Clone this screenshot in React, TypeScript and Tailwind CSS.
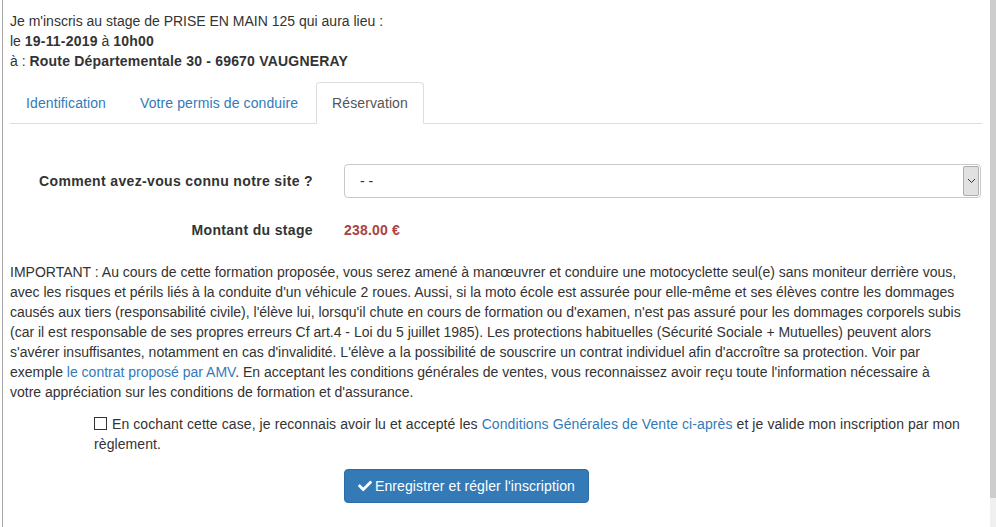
import { FaCheck } from "react-icons/fa";

export default function App() {
  return (
    <div className="flex w-[996px] h-[527px] overflow-hidden bg-white text-[14px] leading-5 text-[#333] font-['Liberation_Sans',Arial,sans-serif]">
      {/* left edge of the page behind */}
      <div className="w-[3px] shrink-0 border-r border-[#a8a8a8] bg-white" />

      {/* main panel */}
      <div className="flex-1 pl-[7px] pr-[8px] pt-[11px]">
        {/* stage summary */}
        <div>
          <p>Je m'inscris au stage de PRISE EN MAIN 125 qui aura lieu :</p>
          <p>
            le <b className="tracking-[0.2px]">19-11-2019</b> à <b className="tracking-[0.2px]">10h00</b>
          </p>
          <p>
            à : <b className="tracking-[0.2px]">Route Départementale 30 - 69670 VAUGNERAY</b>
          </p>
        </div>

        {/* tabs */}
        <ul className="mt-[11px] flex border-b border-[#ddd] tracking-[0.1px]">
          <li className="-mb-px mr-[2px]">
            <a className="block rounded-t border border-transparent px-[15px] py-[10px] text-[#337ab7]">Identification</a>
          </li>
          <li className="-mb-px mr-[2px]">
            <a className="block rounded-t border border-transparent px-[15px] py-[10px] text-[#337ab7]">Votre permis de conduire</a>
          </li>
          <li className="-mb-px mr-[2px]">
            <a className="block rounded-t border border-[#ddd] border-b-transparent bg-white px-[15px] py-[10px] text-[#555]">Réservation</a>
          </li>
        </ul>

        {/* form */}
        <div className="mt-[40px]">
          <div className="flex items-start">
            <label className="w-[303px] shrink-0 pt-[7px] text-right font-bold tracking-[0.35px]">Comment avez-vous connu notre site ?</label>
            <div className="ml-[31px] flex h-[34px] w-[637px] items-stretch rounded border border-[#c8c8c8] bg-white">
              <span className="flex-1 px-[15px] py-[6px]">- -</span>
              <span className="my-[1px] mr-[1px] flex w-[16px] items-center justify-center rounded-[2px] border border-[#adadad] bg-[#e1e1e1]">
                <svg width="9" height="6" viewBox="0 0 9 6" fill="none">
                  <path d="M1 1l3.5 3.5L8 1" stroke="#333" strokeWidth="1" />
                </svg>
              </span>
            </div>
          </div>

          <div className="mt-[15px] flex items-start">
            <span className="w-[303px] shrink-0 pt-[7px] text-right font-bold tracking-[0.35px]">Montant du stage</span>
            <span className="ml-[31px] pt-[7px] font-bold tracking-[0.2px] text-[#a94442]">238.00 €</span>
          </div>
        </div>

        <p className="mt-[22px] pr-[18px]">
          IMPORTANT : Au cours de cette formation proposée, vous serez amené à manœuvrer et conduire une motocyclette seul(e) sans moniteur derrière vous, avec les risques et périls liés à la conduite d'un véhicule 2 roues. Aussi, si la moto école est assurée pour elle-même et ses élèves contre les dommages causés aux tiers (responsabilité civile), l'élève lui, lorsqu'il chute en cours de formation ou d'examen, n'est pas assuré pour les dommages corporels subis (car il est responsable de ses propres erreurs Cf art.4 - Loi du 5 juillet 1985). Les protections habituelles (Sécurité Sociale + Mutuelles) peuvent alors s'avérer insuffisantes, notamment en cas d'invalidité. L'élève a la possibilité de souscrire un contrat individuel afin d'accroître sa protection. Voir par exemple <a className="text-[#337ab7]">le contrat proposé par AMV</a>. En acceptant les conditions générales de ventes, vous reconnaissez avoir reçu toute l'information nécessaire à votre appréciation sur les conditions de formation et d'assurance.
        </p>

        {/* acceptance */}
        <div className="mt-[12px] ml-[84px] w-[880px] tracking-[0.09px]">
          <p>
            <span className="mr-[5px] inline-block h-[13px] w-[13px] translate-y-[1px] border border-[#333] bg-white align-baseline" />
            En cochant cette case, je reconnais avoir lu et accepté les{" "}
            <a className="text-[#337ab7]">Conditions Générales de Vente ci-après</a> et je valide mon inscription par mon règlement.
          </p>
        </div>

        <div className="mt-[15px] ml-[334px]">
          <button className="flex h-[34px] items-center gap-[3px] rounded border border-[#2e6da4] bg-[#337ab7] px-[13px] tracking-[0.1px] text-white">
            <FaCheck className="h-[14px] w-[14px]" />
            Enregistrer et régler l'inscription
          </button>
        </div>
      </div>

      {/* scrollbar */}
      <div className="flex w-[6px] shrink-0 flex-col">
        <div className="h-[498px] bg-[#cdcdcd]" />
        <div className="flex-1 bg-[#f0f0f0]" />
      </div>
    </div>
  );
}
